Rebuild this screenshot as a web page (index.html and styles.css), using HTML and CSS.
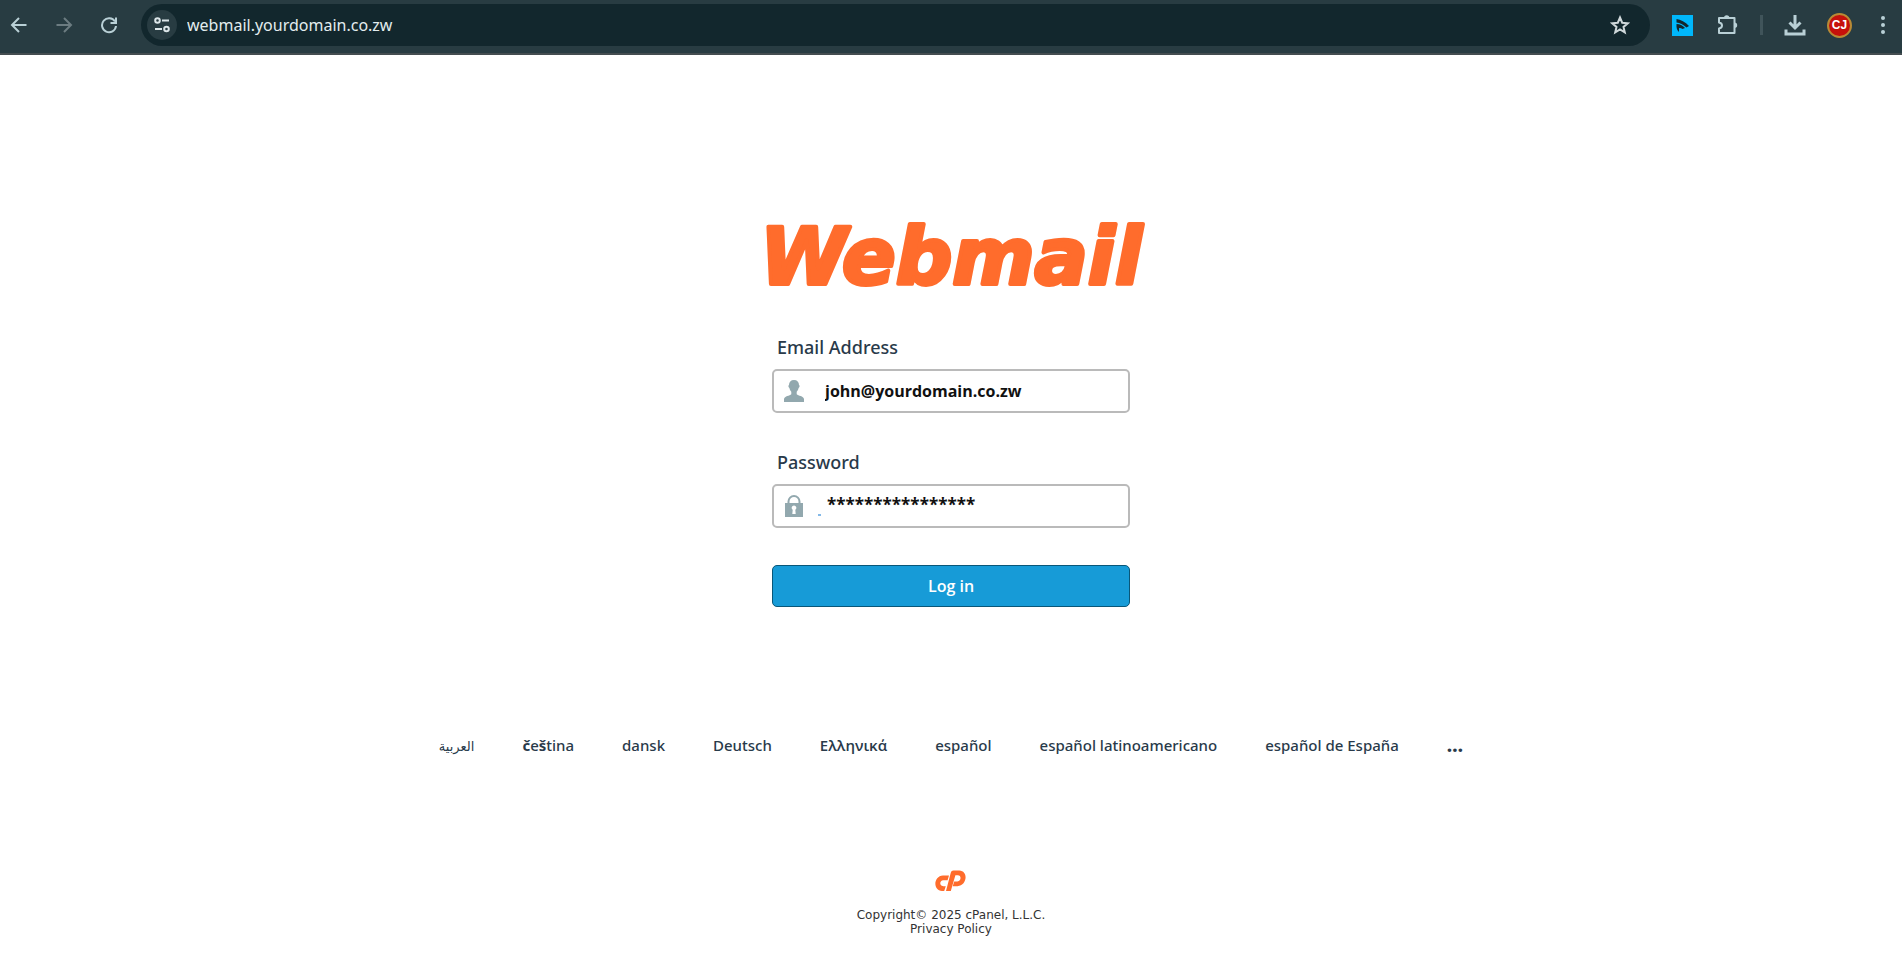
FILE: index.html
```html
<!DOCTYPE html>
<html lang="en">
<head>
<meta charset="utf-8">
<title>Webmail Login</title>
<link rel="stylesheet" href="styles.css">
</head>
<body>
<header class="toolbar">
  <nav class="nav-buttons" aria-label="Browser navigation">
    <button class="icon-button" aria-label="Back"><svg width="18" height="18" viewBox="0 0 18 18"><path d="M16.500 9H2.500M9 2L2 9l7 7"/></svg></button>
    <button class="icon-button dim" aria-label="Forward"><svg width="18" height="18" viewBox="0 0 18 18"><path d="M1.500 9h14M9 2l7 7-7 7"/></svg></button>
    <button class="icon-button" aria-label="Reload"><svg width="18" height="18" viewBox="0 0 18 18"><path d="M15 5.500A7 7 0 1 0 16 10M16 1.500V7h-5.500"/></svg></button>
  </nav>
  <div class="address-bar">
    <button class="site-info" aria-label="Site information"><svg width="18" height="18" viewBox="0 0 18 18"><circle cx="4.500" cy="4.500" r="2.300"/><path d="M9 4.500h7M2 13h7"/><circle cx="13.500" cy="13" r="2.300"/></svg></button>
    <input class="url" type="text" aria-label="Address" value="webmail.yourdomain.co.zw">
    <button class="icon-button star" aria-label="Bookmark"><svg width="20" height="20" viewBox="0 0 20 20"><path d="M10 2.500l2.200 5.200 5.600.5-4.300 3.700 1.300 5.500-4.800-2.900-4.800 2.900 1.300-5.500L2.200 8.200l5.600-.5z"/></svg></button>
  </div>
  <div class="actions">
    <button class="icon-button" aria-label="Extension"><svg width="21" height="21" viewBox="0 0 21 21"><rect class="ext-bg" width="21" height="21"/><path class="ext-mark" d="M4.500 4c4 .5 9 3 12.500 7l-2.500 1.500C11 9.500 8 8 4.500 7.500zM4.500 9c3.500 0 6 1.500 8.500 4l-2.500 1c-1.500-1-2.500-1-3.500-.8L7 17c-2-1.500-2.800-4.500-2.500-8z"/></svg></button>
    <button class="icon-button puzzle" aria-label="Extensions"><svg width="22" height="22" viewBox="0 0 22 22"><path d="M2 4h15.500v15H2v-4.500c4-.5 4-5.500 0-6z" stroke-linejoin="round"/><path class="solid" d="M7 4a2.700 2.700 0 0 1 5.400 0zM17.500 8.500a2.700 2.700 0 0 1 0 5.400z"/></svg></button>
    <span class="divider"></span>
    <button class="icon-button download" aria-label="Downloads"><svg width="22" height="22" viewBox="0 0 22 22"><path d="M11 1v12M5.500 8.500L11 14l5.500-5.500M2 15.500V20h18v-4.500"/></svg></button>
    <button class="avatar" aria-label="Profile">CJ</button>
    <button class="icon-button menu" aria-label="Menu"><svg width="6" height="20" viewBox="0 0 6 20"><g class="solid"><circle cx="3" cy="3" r="2"/><circle cx="3" cy="10" r="2"/><circle cx="3" cy="17" r="2"/></g></svg></button>
  </div>
</header>
<main class="page">
  <h1 class="brand"><svg width="408" height="104" viewBox="0 0 408 104" role="img" aria-label="Webmail"><text class="wordmark" x="204" y="81" text-anchor="middle">Webmail</text></svg></h1>
  <form class="login">
    <label for="user">Email Address</label>
    <div class="field">
      <svg width="20" height="22" viewBox="0 0 20 22"><path d="M10 0c3.200 0 5 2 5 5 1 .3.700 2.500-.4 3-.4 1.800-1.100 3-1.900 3.700v2.600c1.500 1.500 6.800 1.800 7.300 4.700V22H0v-3c.5-2.900 5.800-3.200 7.300-4.700v-2.600C6.500 11 5.800 9.800 5.400 8 4.300 7.500 4 5.300 5 5c0-3 1.800-5 5-5z"/></svg>
      <input id="user" type="text" value="john@yourdomain.co.zw">
    </div>
    <label for="pass">Password</label>
    <div class="field secret">
      <svg width="20" height="22" viewBox="0 0 20 22"><path fill-rule="evenodd" d="M1 8h2.500V6.500a6.500 6.500 0 0 1 13 0V8H19v14H1zM5.500 8h9V6.500a4.500 4.500 0 0 0-9 0zM10 10.500a2.300 2.300 0 0 0-1.300 4.200L8.300 19h3.400l-.4-4.300a2.300 2.300 0 0 0-1.300-4.200z"/></svg>
      <input id="pass" type="text" autocomplete="off" value="****************">
    </div>
    <button class="submit" type="button">Log in</button>
  </form>
  <ul class="languages">
    <li><a class="arabic" href="#" lang="ar">العربية</a></li>
    <li><a href="#" lang="cs"><b>č</b>e<b>š</b>tina</a></li>
    <li><a href="#" lang="da">dansk</a></li>
    <li><a href="#" lang="de">Deutsch</a></li>
    <li><a class="greek" href="#" lang="el">Ελληνικά</a></li>
    <li><a href="#" lang="es">español</a></li>
    <li><a href="#" lang="es-419">español latinoamericano</a></li>
    <li><a href="#" lang="es-ES">español de España</a></li>
    <li><a class="more" href="#" aria-label="More languages">…</a></li>
  </ul>
  <footer class="footer">
    <svg width="31" height="22" viewBox="0 0 31 22" aria-label="cPanel"><path d="M8 5.500h6l-1.400 4.700H8.300c-3.800 0-4.300 6 0 6h2.500L9.200 21H7C-2.500 20.500-1.500 6 8 5.500zM18.500.5h5.800c9.500.5 7.700 15.300-1.800 15.700h-4.800l1.500-4.700h3.200c3.800 0 4.400-6.200.4-6.200h-2.400L15.800 21H11L15.700 3c.5-1.700 1.200-2.500 2.800-2.500z"/></svg>
    <p>Copyright© 2025 cPanel, L.L.C.<br><a href="#">Privacy Policy</a></p>
  </footer>
</main>
</body>
</html>
```
FILE: styles.css
```css
* { box-sizing: border-box; }
body { margin: 0; background: #fff; color: #293a4a; font-family: "Noto Sans", "Open Sans", sans-serif; }
button { padding: 0; border: 0; background: none; cursor: pointer; }
a { color: inherit; text-decoration: none; }
svg { display: block; }

.toolbar { display: flex; align-items: center; height: 55px; padding: 0 16px 3px 10px; background: #283c42; border-bottom: 2px solid #444d50; }
.nav-buttons { display: flex; gap: 27px; margin-right: 23px; }
.icon-button svg { fill: none; stroke: #b9d0d6; stroke-width: 2; }
.icon-button.dim svg { stroke: #6c7c81; }
.icon-button .solid { fill: #b9d0d6; stroke: none; }
.address-bar { display: flex; flex: 1; align-items: center; height: 42px; padding: 0 20px 0 6px; border-radius: 21px; background: #12272d; }
.site-info { display: grid; place-items: center; width: 30px; height: 30px; border-radius: 50%; background: #283c42; }
.site-info svg { fill: none; stroke: #dce6e9; stroke-width: 2; }
.url { flex: 1; margin-left: 10px; padding: 0; border: 0; outline: 0; background: none; color: #e3edef; font: 16px "Noto Sans", sans-serif; }
.star svg { stroke: #cfd8da; }
.actions { display: flex; align-items: center; gap: 21px; margin-left: 22px; }
.icon-button .ext-bg { fill: #00b7fb; stroke: none; }
.icon-button .ext-mark { fill: #14252b; stroke: none; }
.puzzle { padding-left: 3px; }
.download svg { stroke-width: 3; }
.menu { padding-left: 7px; }
.divider { width: 3px; height: 20px; background: #40545a; }
.avatar { width: 25px; height: 25px; border: 2px solid #b98a35; border-radius: 50%; background: #c6110b; color: #fff; font: bold 12px/20px "Liberation Sans", sans-serif; }

.page { display: flex; flex-direction: column; align-items: center; padding: 148px 16px 16px; }
.brand { margin: 0 0 26px; }
.wordmark { fill: #ff6c2c; stroke: #ff6c2c; stroke-width: 4; stroke-linejoin: round; font: italic bold 79px "DejaVu Sans", sans-serif; }
.login { display: flex; flex-direction: column; width: 358px; max-width: 100%; }
.login label { padding-left: 5px; margin-bottom: 8px; font-size: 18px; font-weight: 500; line-height: 28px; }
.field { position: relative; display: flex; align-items: center; height: 44px; margin-bottom: 35px; padding-left: 10px; border: 2px solid #bababa; border-radius: 5px; }
.field svg { fill: #92a8ae; }
.field input { flex: 1; min-width: 0; margin-left: 16px; padding: 0 0 0 5px; border: 0; outline: 0; background: none; color: #111; font: bold 16px "Open Sans", sans-serif; }
.secret { margin-bottom: 37px; }
.field.secret input { padding: 0 0 4px 7px; font-size: 17px; }
.secret::after { content: ""; position: absolute; left: 44px; bottom: 10px; width: 3px; height: 2px; background: #84b9e8; }
.submit { height: 42px; border: 1px solid #095779; border-radius: 5px; background: #179bd7; color: #fff; font: 600 16px "Open Sans", sans-serif; }

.languages { display: flex; flex-wrap: wrap; justify-content: center; gap: 12px 48px; margin: 127px 0 0; padding: 0; list-style: none; font-size: 15px; font-weight: 500; line-height: 22px; }
.arabic { font-family: "DejaVu Sans", sans-serif; font-size: 13px; }
.greek { font-family: "Open Sans", sans-serif; font-weight: 600; }
.more { font-weight: 800; font-size: 19px; }

.footer { display: flex; flex-direction: column; align-items: center; gap: 16px; margin-top: 112px; color: #333; font: 12px/14px "DejaVu Sans", sans-serif; text-align: center; }
.footer svg { fill: #ff6c2c; }
.footer p { margin: 0; }
```
